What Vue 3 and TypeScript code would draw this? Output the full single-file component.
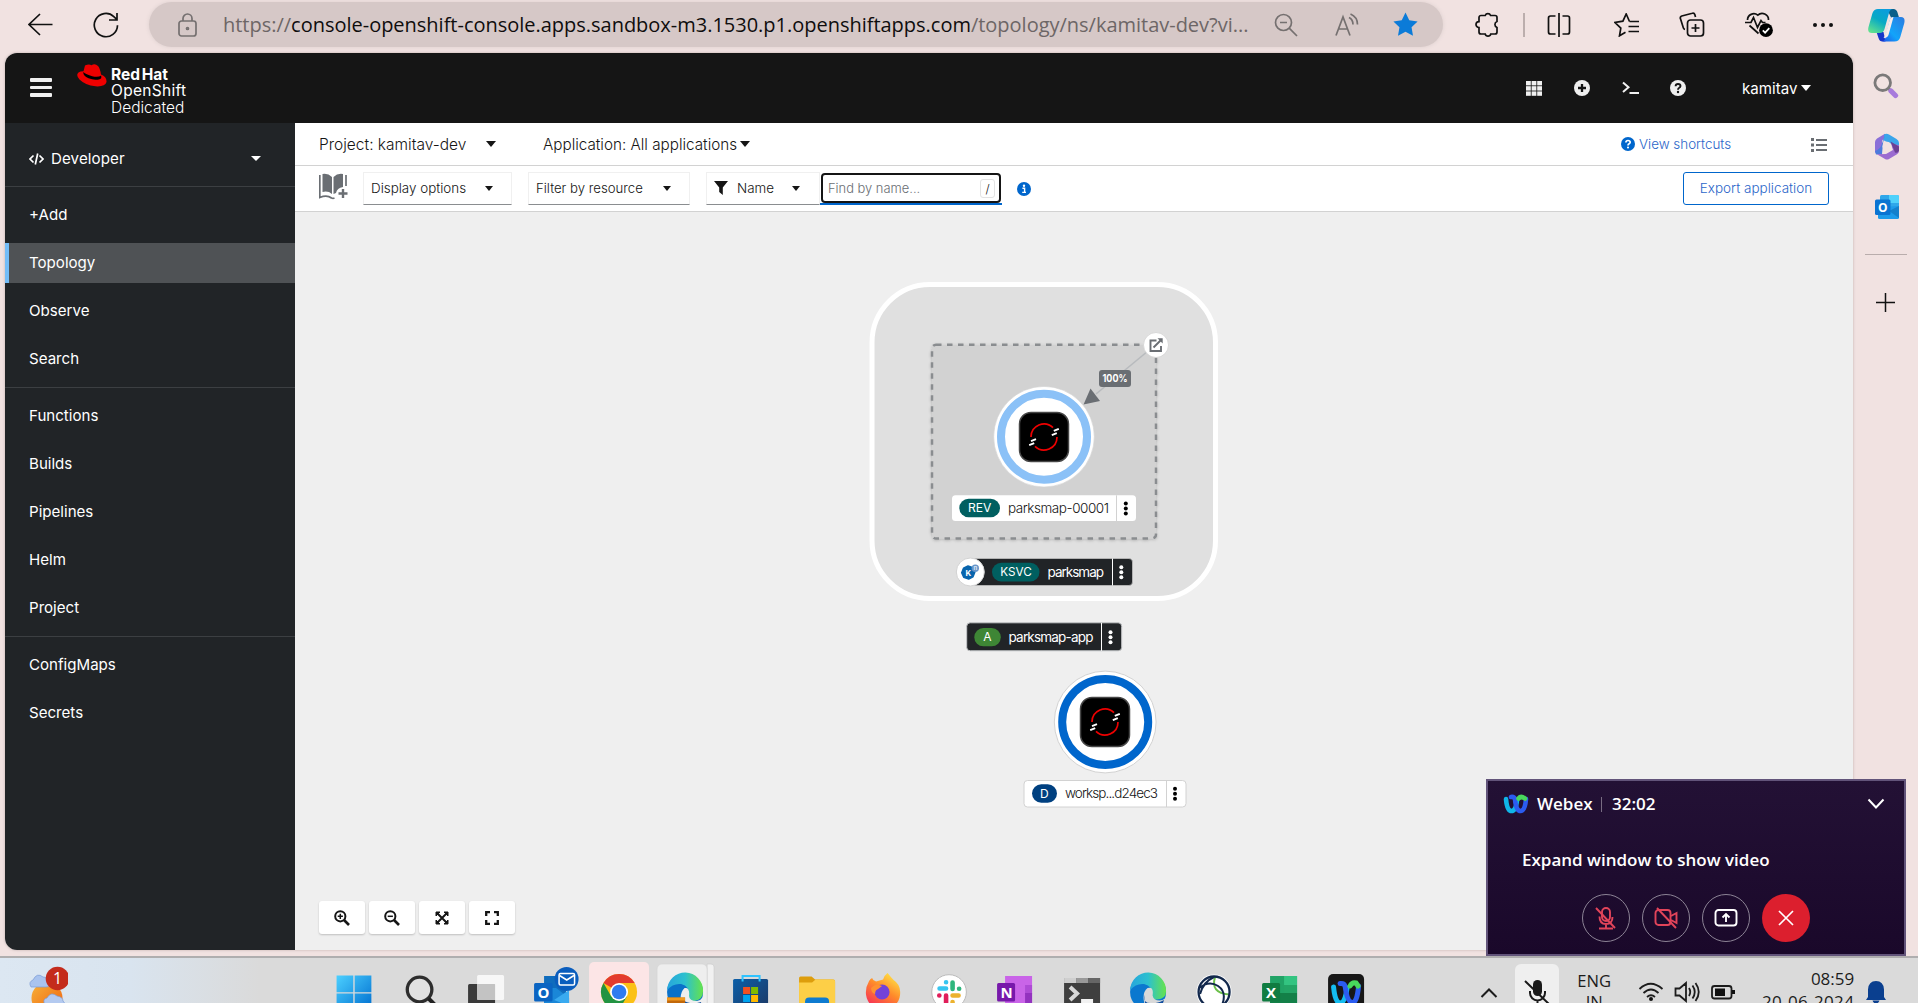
<script setup lang="ts">
interface NavGroup { id: string; items: string[] }

const navGroups: NavGroup[] = [
  { id: 'main', items: ['+Add', 'Topology', 'Observe', 'Search'] },
  { id: 'build', items: ['Functions', 'Builds', 'Pipelines', 'Helm', 'Project'] },
  { id: 'config', items: ['ConfigMaps', 'Secrets'] },
]
const activeItem = 'Topology'
const gridCells = [0, 1, 2, 3, 4, 5, 6, 7, 8]
</script>

<template>
  <div class="screen">
    <!-- Browser toolbar -->
    <header class="toolbar">
      <svg class="tb back" width="25" height="23" viewBox="0 0 25 23"><path d="M24.5 11.5H1M12 1 1 11.5 12 22" /></svg>
      <svg class="tb reload" width="26" height="26" viewBox="0 0 26 26"><path d="M24.5 13.2A11.6 11.6 0 1 1 20.8 4.6L24 7.6M24 1v7h-8" /></svg>
      <div class="address">
        <svg class="tb muted lock" width="19" height="24" viewBox="0 0 19 24"><rect x="1" y="8" width="17" height="15" rx="2.5" /><path d="M5 8V5.5a4.5 4.5 0 0 1 9 0V8" /><circle cx="9.5" cy="15.5" r="1" /></svg>
        <span class="url">https://<b>console-openshift-console.apps.sandbox-m3.1530.p1.openshiftapps.com</b>/topology/ns/kamitav-dev?vi...</span>
        <svg class="tb muted zoomout" width="24" height="24" viewBox="0 0 24 24"><circle cx="9.5" cy="9.5" r="8" /><path d="M6 9.5h7M15.2 15.2 23 23" /></svg>
        <svg class="tb muted aloud" width="24" height="24" viewBox="0 0 24 24"><path d="M1 22.5 8 4l7 18.500M3.500 16h9M14 4.500q4 2 4 7M15.500 1q7 3 7 10.500" /></svg>
        <svg class="star" width="25" height="25" viewBox="0 0 24 24"><path d="m12 .5 3.600 7.300 8 1.200-5.800 5.700 1.400 8.200-7.200-3.900-7.200 3.900 1.400-8.200L.4 9l8-1.200z" fill="#0b7bd8" /></svg>
      </div>
      <svg class="tb puzzle" width="24" height="25" viewBox="0 0 24 25"><path d="M6 3.500h4.200a2.900 2.900 0 0 1 5.400 0H20a2 2 0 0 1 2 2V9.500a3.200 3.200 0 0 0 0 6V20a2 2 0 0 1-2 2h-4.200a2.900 2.900 0 0 1-5.600 0H6a2 2 0 0 1-2-2v-4.400a3 3 0 0 1 0-6V5.500a2 2 0 0 1 2-2z" /></svg>
      <i class="sep"></i>
      <svg class="tb split" width="24" height="24" viewBox="0 0 24 24"><path d="M12 0v24M8.500 3H3.500A2 2 0 0 0 1.500 5v14a2 2 0 0 0 2 2h5M15.500 3h5a2 2 0 0 1 2 2v14a2 2 0 0 1-2 2h-5" /></svg>
      <svg class="tb favs" width="26" height="24" viewBox="0 0 26 24"><path d="M15.500 8.500 12.200 1 8.900 8.200 1 9.500l5.800 5.600L5.500 22.800l6-3.500M15.500 8.500H25M14.500 13.500H25M14.500 18.500H25" /></svg>
      <svg class="tb coll" width="26" height="25" viewBox="0 0 26 25"><rect x="8.500" y="8" width="16" height="16" rx="3" /><path d="M16.500 12v8M12.500 16h8M16.500 5 15.800 2.500a2 2 0 0 0-2.500-1.300L2.800 4A2 2 0 0 0 1.400 6.600l3 9.500A2 2 0 0 0 6 17.500" /></svg>
      <svg class="tb heart" width="29" height="27" viewBox="0 0 29 27"><path d="M2.500 9A6.300 6.300 0 0 1 12.800 4.200 6.300 6.300 0 0 1 23.500 9M0 11.500h6l2.500-5 4 10 3.500-7 1.500 2h3M4.500 14.500l9 8" /><circle cx="21" cy="19.200" r="6.900" fill="#000" stroke="none" /><path d="m17.800 19.400 2.300 2.300 4.200-4.500" stroke="#fff" /></svg>
      <svg class="dots" width="22" height="6" viewBox="0 0 22 6"><circle cx="3" cy="3" r="2" /><circle cx="11" cy="3" r="2" /><circle cx="19" cy="3" r="2" /></svg>
      <svg class="copilot" width="37" height="34" viewBox="0 0 37 34">
        <defs>
          <linearGradient id="cpA" x1=".8" y1="0" x2=".2" y2="1"><stop offset="0" stop-color="#0c9be0" /><stop offset=".5" stop-color="#08aac4" /><stop offset="1" stop-color="#5fe08f" /></linearGradient>
          <linearGradient id="cpB" x1="1" y1="0" x2="0" y2="1"><stop offset="0" stop-color="#2b7be0" /><stop offset=".6" stop-color="#12a4fa" /><stop offset="1" stop-color="#1e50e8" /></linearGradient>
        </defs>
        <path d="M19 1h6.500q3 0 4 3.500L31 9.500h-8z" fill="#0a5f8a" />
        <path d="M8.500 24h7l2 9.500h-3q-3 0-4-3.500z" fill="#1735c9" />
        <path d="M10 1h15q-3 0-4 4l-4.500 16q-1 4-5 4H4q-5 0-3.500-6L4.500 5Q6 1 10 1z" fill="url(#cpA)" />
        <path d="M25.500 9H33q4.500 0 3.300 6l-4 14q-1.200 4.500-6 4.500H13.500q3 0 4-4l4-16.500q1-4 4-4z" fill="url(#cpB)" />
        <path d="M21.500 12.500q1-3.500 4-3.500l-5 18q-1 3-5 3l2-3z" fill="#f6eceb" />
      </svg>
    </header>

    <div class="body">
      <div class="app">
        <!-- Console masthead -->
        <header class="masthead">
          <div class="burger"><i></i><i></i><i></i></div>
          <svg class="hat" width="30" height="23" viewBox="0 0 30 23"><path d="M8 1.500Q12-.5 14.500 1.200 18-1 21 2q2 2 3 8.500Q30 13 29.500 18q-1.500 5-11 4.300Q8 21 2.500 15.500-1.500 11 1.500 8.500 3 7.300 6.500 7.200z" fill="#e00" /><path d="M6.300 8Q6 12 11.500 14.300q6.500 2.600 11.800.6 1.500-.8.900-3.500-3 2.400-9 .8Q9 10.500 6.300 8z" fill="#000" /></svg>
          <div class="brand"><b>Red Hat</b><span>OpenShift</span><span class="ded">Dedicated</span></div>
          <svg class="grid" width="16" height="15" viewBox="0 0 16 15"><rect v-for="n in gridCells" :key="n" :x="(n % 3) * 5.600" :y="Math.floor(n / 3) * 5.200" width="4.800" height="4.400" fill="#f0f0f0" /></svg>
          <svg class="plus" width="16" height="16" viewBox="0 0 16 16"><circle cx="8" cy="8" r="8" fill="#f0f0f0" /><path d="M8 4v8M4 8h8" stroke="#151515" stroke-width="2.300" /></svg>
          <svg class="term" width="17" height="14" viewBox="0 0 17 14"><path d="m1 1.500 5.500 4.800L1 11" fill="none" stroke="#f0f0f0" stroke-width="2" /><path d="M7.500 12H17" stroke="#f0f0f0" stroke-width="2" /></svg>
          <svg class="help" width="16" height="16" viewBox="0 0 16 16"><circle cx="8" cy="8" r="8" fill="#f0f0f0" /><path d="M5.600 6.300Q5.700 4 8 4q2.500 0 2.500 2 0 1-1.300 1.800Q8 8.500 8 9.700" fill="none" stroke="#151515" stroke-width="1.900" /><circle cx="8" cy="12" r="1.200" fill="#151515" /></svg>
          <span class="user">kamitav</span><i class="caret white"></i>
        </header>

        <div class="console">
          <!-- Perspective navigation -->
          <nav class="side">
            <div class="perspective">
              <svg width="15" height="12" viewBox="0 0 15 12"><path d="M4.500 2.500 1 6l3.500 3.500M10.500 2.500 14 6l-3.500 3.500M8.700.5 6.300 11.500" fill="none" stroke="#fff" stroke-width="1.700" /></svg>
              <span>Developer</span><i class="caret white"></i>
            </div>
            <ul v-for="g in navGroups" :key="g.id">
              <li v-for="item in g.items" :key="item" :class="{ active: item === activeItem }">{{ item }}</li>
            </ul>
          </nav>

          <main class="main">
            <div class="bar1">
              <span class="project">Project: kamitav-dev</span><i class="caret black"></i>
              <span class="application">Application: All applications</span><i class="caret black near"></i>
              <svg class="qm" width="14" height="14" viewBox="0 0 16 16"><circle cx="8" cy="8" r="8" fill="#06c" /><path d="M5.600 6.300Q5.700 4 8 4q2.500 0 2.500 2 0 1-1.300 1.800Q8 8.500 8 9.700" fill="none" stroke="#fff" stroke-width="1.900" /><circle cx="8" cy="12" r="1.200" fill="#fff" /></svg>
              <span class="shortcuts">View shortcuts</span>
              <svg class="list" width="16" height="14" viewBox="0 0 16 14"><path d="M0 1.500h3M0 7h3M0 12.500h3" stroke-width="3" /><path d="M5 2h11M5 7h11M5 12h11" stroke-width="2" /></svg>
            </div>

            <div class="bar2">
              <svg class="book" width="29" height="27" viewBox="0 0 29 27"><path d="M3.500 1Q9 0 13 4v17Q9 17.500 3.500 19zM14.500 4Q18.500 0 24 1v13Q18 15 17 20l-2.500 1z" fill="#6a6e73" /><path d="M.8 2v22.500Q8 21.500 12.500 25q1.500.6 3 0M27 2v11" fill="none" stroke="#6a6e73" stroke-width="1.700" /><path d="M24 16v9M19.500 20.500h9" stroke="#6a6e73" stroke-width="2.400" /></svg>
              <div class="select display"><span>Display options</span><i class="caret"></i></div>
              <div class="select filter"><span>Filter by resource</span><i class="caret"></i></div>
              <div class="select name">
                <svg width="14" height="14" viewBox="0 0 14 14"><path d="M0 0h14L8.800 6.500V14L5.200 11V6.500z" fill="#151515" /></svg>
                <span>Name</span><i class="caret"></i>
              </div>
              <div class="find"><div class="ring"><span>Find by name...</span><kbd>/</kbd></div></div>
              <svg class="info" width="14" height="14" viewBox="0 0 14 14"><circle cx="7" cy="7" r="7" fill="#06c" /><circle cx="7" cy="3.700" r="1.200" fill="#fff" /><path d="M5.400 6.200h2.200v4M5.200 10.400h3.800" fill="none" stroke="#fff" stroke-width="1.400" /></svg>
              <button class="export">Export application</button>
            </div>

            <!-- Topology canvas, drawn in window coordinates -->
            <div class="canvas">
              <svg class="graph" width="1558" height="738" viewBox="295 212 1558 738">
                <defs>
                  <g id="os">
                    <rect x="-24.500" y="-24.500" width="49" height="49" rx="11.500" fill="#000" stroke="#474747" stroke-width="1.500" />
                    <path d="M-13 0A13 13 0 0 1 9-9.400M13 0A13 13 0 0 1-9 9.400" fill="none" stroke="#e00" stroke-width="1.700" />
                    <path d="m9.800-6.200 5-2M7.800-1.800l5-2M-14.800 8.200l5-2M-13 4.200l5-2" stroke="#fff" stroke-width="1.900" />
                  </g>
                  <g id="kebab"><circle cy="-5" r="2" /><circle r="2" /><circle cy="5" r="2" /></g>
                  <filter id="sh" x="-20%" y="-20%" width="140%" height="150%"><feDropShadow dx="0" dy="1" stdDeviation="1.500" flood-opacity=".2" /></filter>
                </defs>

                <rect x="872" y="284.500" width="343.500" height="314" rx="58" fill="#e0e0e0" stroke="#fff" stroke-width="5" />
                <g filter="url(#sh)"><rect x="932" y="344.700" width="224" height="193.800" rx="4" fill="#d2d2d2" stroke="#8a8d90" stroke-width="2.500" stroke-dasharray="5.500 5.500" /></g>

                <path d="M1148 351 1096 394" stroke="#b8bbbe" stroke-width="1.600" />
                <path d="m1083.500 404.500 7-16 9.500 12.500z" fill="#6a6e73" />
                <rect x="1099" y="370" width="32" height="17" rx="3" fill="#6a6e73" />
                <text x="1102.500" y="382.200" textLength="25" lengthAdjust="spacingAndGlyphs" class="pct">100%</text>
                <circle cx="1156" cy="345" r="12.500" fill="#fff" stroke="#d2d2d2" stroke-width=".8" />
                <path d="M1156.500 340.500h-6v10.500h10.500v-5M1153.500 347.500l8-8" fill="none" stroke="#6a6e73" stroke-width="1.900" /><path d="M1157.500 338.300h5.200v5.200z" fill="#6a6e73" />

                <circle cx="1044" cy="436.700" r="50.300" fill="#fff" stroke="#d2d2d2" stroke-width=".6" />
                <circle cx="1044" cy="436.700" r="43" fill="none" stroke="#8bc1f7" stroke-width="8" />
                <use href="#os" x="1044" y="437" />

                <rect x="952" y="495.300" width="184" height="25.700" rx="3.500" fill="#fff" />
                <rect x="959.300" y="498.700" width="40.700" height="18.600" rx="9.300" fill="#005f60" />
                <text x="968" y="512.200" textLength="23.500" lengthAdjust="spacingAndGlyphs" class="badge">REV</text>
                <text x="1008" y="513" textLength="101" class="lbl">parksmap-00001</text>
                <path d="M1116.500 495.300v25.700" stroke="#d2d2d2" /><use href="#kebab" x="1125.800" y="508.500" />

                <rect x="972" y="558.500" width="160.500" height="27" rx="3.500" fill="#212427" stroke="#c9c9c9" stroke-width=".7" />
                <circle cx="970.300" cy="572" r="14" fill="#fff" stroke="#d2d2d2" stroke-width="1" />
                <path d="m968 566 4.800 1.800 2 4.500-1.800 4.500-4.300 2.200-5-1.800-2-4.500 1.800-4.500z" fill="#0865ad" stroke="#0865ad" stroke-width="1.500" stroke-linejoin="round" />
                <circle cx="975.300" cy="568.300" r="3.700" fill="#6695ca" /><text x="973.600" y="570.300" class="tiny">n</text>
                <text x="965.500" y="575.600" class="kk">K</text>
                <rect x="992" y="562.800" width="47.500" height="18.600" rx="9.300" fill="#005f60" />
                <text x="1000.300" y="576.200" textLength="31.500" lengthAdjust="spacingAndGlyphs" class="badge">KSVC</text>
                <text x="1047.500" y="577.200" textLength="56.500" class="lbl light">parksmap</text>
                <path d="M1112.500 558.500v27" stroke="#fff" /><use href="#kebab" x="1121.300" y="572.200" fill="#fff" />

                <rect x="966.700" y="622.800" width="155" height="28" rx="3.500" fill="#212427" stroke="#c4c6c8" stroke-width="1" />
                <rect x="974.300" y="628" width="26.500" height="18.300" rx="9.100" fill="#3e8635" />
                <text x="983.300" y="641.400" textLength="8.500" class="badge">A</text>
                <text x="1008.500" y="642" textLength="85" class="lbl light">parksmap-app</text>
                <path d="M1101.500 622.800v28" stroke="#fff" /><use href="#kebab" x="1110.500" y="637.300" fill="#fff" />

                <circle cx="1105.200" cy="722" r="50.900" fill="#fff" stroke="#d2d2d2" />
                <circle cx="1105.200" cy="722" r="43" fill="none" stroke="#06c" stroke-width="8" />
                <use href="#os" x="1105" y="722" />
                <rect x="1024" y="780.500" width="162" height="26.500" rx="3.500" fill="#fff" stroke="#d2d2d2" />
                <rect x="1032" y="784.200" width="25" height="18.600" rx="9.300" fill="#004080" />
                <text x="1040" y="798" textLength="9" class="badge">D</text>
                <text x="1065" y="798" textLength="93" class="lbl">worksp...d24ec3</text>
                <path d="M1166.500 780.500v26.500" stroke="#d2d2d2" /><use href="#kebab" x="1175" y="793.800" />
              </svg>

              <div class="zoomers">
                <button><svg width="16" height="16" viewBox="0 0 16 16"><circle cx="6.300" cy="6.300" r="5.100" /><path d="m10 10 5 5" stroke-width="2.700" /><path d="M6.300 3.700v5.200M3.700 6.300h5.200" stroke-width="1.500" /></svg></button>
                <button><svg width="16" height="16" viewBox="0 0 16 16"><circle cx="6.300" cy="6.300" r="5.100" /><path d="m10 10 5 5" stroke-width="2.700" /><path d="M3.700 6.300h5.200" stroke-width="1.500" /></svg></button>
                <button><svg width="14" height="14" viewBox="0 0 14 14"><path d="m2 2 10 10M12 2 2 12" /><path d="M1 5V1h4zM9 1h4v4zM13 9v4H9zM5 13H1V9z" fill="#151515" stroke-width="1" /></svg></button>
                <button><svg width="14" height="14" viewBox="0 0 14 14"><path d="M1.200 5V1.200H5M9 1.200h3.800V5M12.800 9v3.800H9M5 12.800H1.200V9" stroke-width="2.300" /></svg></button>
              </div>
            </div>
          </main>
        </div>
      </div>

      <!-- Browser side panel -->
      <aside class="panel">
        <svg class="p1" width="26" height="26" viewBox="0 0 26 26"><circle cx="9.700" cy="9.700" r="7.800" fill="none" stroke="#7b7979" stroke-width="2.800" /><path d="m15.500 15.500 3 3" stroke="#7b7979" stroke-width="3" /><path d="m18 18 4.500 4.500" stroke="#a87bdc" stroke-width="5.200" stroke-linecap="round" /></svg>
        <svg class="p2" width="26" height="27" viewBox="0 0 26 27">
          <path d="M11 .8 3 5.500Q1 7 1 9v9q0 2 1.500 3L8 22V9q0-2 1.500-3L12 4z" fill="#8a6fd8" /><path d="M10 5V1.500Q12.500 0 15 1.500L22.500 6Q25 7.500 25 10v5L9 7z" fill="#3aa5ea" /><path d="M11 1 9 10l-1 11-6 .500L1 18Q6 16 7.500 12T11 1z" fill="#4d7bdc" /><path d="M25 12v6q0 2-2 3.200L15 26q-2 1-4 0l-8-4.700 9-.300 7-4-2-6z" fill="#9b6bd0" /><path d="m16.500 8.500 8.500 5v4q-1 3-4 2z" fill="#6b3f93" /><circle cx="13" cy="13.300" r="4.500" fill="#f1e2e1" />
        </svg>
        <svg class="p3" width="25" height="25" viewBox="0 0 25 25"><rect x="5" y="0" width="19" height="14" rx="1.500" fill="#2fa7ea" /><path d="M14 0h8.500Q24 0 24 1.500V8H14z" fill="#50d1fb" /><path d="M3 12 24 11v11.500q0 1.500-1.500 1.500h-18Q3 24 3 22.500z" fill="#1d9bea" /><path d="m14 16 10-5v12z" fill="#1480cc" /><rect x="0" y="4.500" width="15.500" height="15.500" rx="1.500" fill="#0a74d2" /><text x="3" y="16.700" class="oo">O</text></svg>
        <hr />
        <svg class="p4" width="19" height="19" viewBox="0 0 19 19"><path d="M9.500 0v19M0 9.500h19" stroke="#111" stroke-width="1.500" /></svg>
      </aside>
    </div>

    <!-- Taskbar -->
    <footer class="taskbar">
      <svg class="weather" width="40" height="47" viewBox="28 956 40 47"><defs><linearGradient id="sun" x1="0" y1="0" x2="1" y2="1"><stop offset="0" stop-color="#f6b23a" /><stop offset="1" stop-color="#f0600d" /></linearGradient></defs><circle cx="47" cy="998" r="15.500" fill="url(#sun)" /><path d="M31 987q-3-5 2-7 4-8 10-3 5 0 5 5 3 5-2 5z" fill="#a9c3ee" stroke="#7d9cd6" stroke-width=".7" /><path d="M45 1005q-3-6 2-7 4-7 10-2 6 1 6 5 3 2 1 5z" fill="#b4caf0" stroke="#7d9cd6" stroke-width=".7" /><circle cx="57.500" cy="978.500" r="11.800" fill="#c42b1c" /></svg>
      <span class="count">1</span>
      <div class="apps">
        <svg viewBox="-33 -36 66 47"><defs><linearGradient id="win" gradientUnits="userSpaceOnUse" x1="-17" y1="-17" x2="17" y2="17"><stop offset="0" stop-color="#4cd0ff" /><stop offset="1" stop-color="#006fd0" /></linearGradient></defs><path d="M-17.500-16.500h16.700V.3h-16.700zM.6-16.500h16.700V.3H.6zM-17.500 1.500h16.700v17h-16.700zM.6 1.500h16.700v17H.6z" fill="url(#win)" /></svg>
        <svg viewBox="-33 -36 66 47"><circle cx="-.5" cy="-2.500" r="12.300" fill="#e4e4e4" fill-opacity=".7" stroke="#2d2d2d" stroke-width="3.300" /><path d="m8.500 6.500 8 8" stroke="#222" stroke-width="4" /></svg>
        <svg viewBox="-33 -36 66 47"><rect x="-18" y="-8" width="27" height="24" rx="1.500" fill="#3a3a3a" /><rect x="-9" y="-17" width="27" height="25" rx="1.500" fill="#fafafa" fill-opacity=".88" /><path d="M-9-8H9V8H-9z" fill="#b8b8b8" opacity=".75" /></svg>
        <svg viewBox="-33 -36 66 47"><path d="M-8-16H14V20H-8z" fill="#0f6cbd" /><path d="M-8-4h12L17 6v12H-8z" fill="#1a87d8" /><path d="m17-2-15 10 15 6z" fill="#39aaf0" /><rect x="-18" y="-9" width="18.500" height="18.500" rx="1.500" fill="#0a64c2" /><text x="-14.700" y="5.500" class="ti">O</text><circle cx="14.500" cy="-13" r="12" fill="#0a5dbd" /><rect x="7" y="-18.500" width="15.500" height="11.500" rx="1.500" fill="none" stroke="#fff" stroke-width="1.500" /><path d="m7.500-16.500 7.200 4.500 7.200-4.500" fill="none" stroke="#fff" stroke-width="1.500" /></svg>
        <svg viewBox="-33 -36 66 47"><rect x="-30" y="-30" width="60" height="50" rx="5" fill="#fce5e6" /><circle r="18" fill="#fbc116" /><path d="M0 0-15.600-9A18 18 0 0 1 15.600-9H0z" fill="#e33b2e" /><path d="M-15.600-9A18 18 0 0 0 0 18L7.800 4.500-7.800 4.500z" fill="#229342" /><circle r="9" fill="#fff" /><circle r="7.300" fill="#2f7bf0" /></svg>
        <svg viewBox="-33 -36 66 47"><defs><linearGradient id="eg"><stop offset="0" stop-color="#27a5dc" /><stop offset=".5" stop-color="#2cc0cf" /><stop offset="1" stop-color="#66e34a" /></linearGradient></defs><path d="M22-28h4q3 0 3 3v40h-7z" fill="#f1f1f1" stroke="#ccc" stroke-width=".7" /><rect x="-28" y="-28" width="50" height="50" rx="5" fill="#eee" stroke="#d4d4d4" stroke-width=".6" /><circle r="18" fill="#0a71c9" /><path d="M-18-2A18 18 0 0 1 18-1Q18 8 9 9 2 9 4 4.500 5-6-4-8-12-9-18-2z" fill="url(#eg)" /><path d="M-4 12Q-6 1-.5-4 5-5 4 4q0 5 8 5 3 0 5-3l2 7z" fill="#eee" /><path d="M-1 9q8 4 17 1v9H-1z" fill="#15509e" /><rect x="-18" y="5.500" width="18" height="12" fill="#c2680a" /><path d="M-18 5.500H0v3h-18z" fill="#f29a1c" /></svg>
        <svg viewBox="-33 -36 66 47"><defs><linearGradient id="st" x1="0" y1="0" x2="1" y2="1"><stop offset="0" stop-color="#0c5fa8" /><stop offset="1" stop-color="#1d3560" /></linearGradient></defs><rect x="-18" y="-13" width="35" height="35" rx="1.500" fill="url(#st)" /><path d="M-8.500-10.500v-5.500h17v5.500" fill="none" stroke="#2fc3ff" stroke-width="2" /><path d="M-8-5h7v7h-7z" fill="#f25022" /><path d="M0-5h7v7H0z" fill="#7fba00" /><path d="M-8 3h7v7h-7z" fill="#00a4ef" /><path d="M0 3h7v7H0z" fill="#ffb900" /></svg>
        <svg viewBox="-33 -36 66 47"><path d="M-18-14q0-1.500 1.500-1.500h11l3.500 3H16q2 0 2 2V14h-36z" fill="#dd9d0c" /><path d="M-18-9.500h13l3.500-3H16q2 0 2 2V14h-36z" fill="#fdcf47" /><path d="M-12 14V9.500q0-4 4-4H8q4 0 4 4V14z" fill="#0f7bd0" /></svg>
        <svg viewBox="-33 -36 66 47"><defs><linearGradient id="ff" x1=".8" y1="0" x2=".2" y2="1"><stop offset="0" stop-color="#ffe847" /><stop offset=".45" stop-color="#ff8a2a" /><stop offset="1" stop-color="#f6245d" /></linearGradient></defs><path d="M-14-11q1-2 3-3 1 3 4 3.500l7-2q1-4 4.500-6.500 4 5 6 7 6 4 6.500 11A17 17 0 0 1-17 3q-1-7 3-14z" fill="url(#ff)" /><circle cx="-1" cy="0" r="7.500" fill="#7342d8" /><path d="M-12-4q5-5 8-3l3 1-4 3q-3 1-3 5-4-1-4-6z" fill="#ff9130" /></svg>
        <svg viewBox="-33 -36 66 47"><circle r="17.300" fill="#fff" stroke="#bbb" stroke-width="1" /><g stroke-width="4.600" stroke-linecap="round"><path d="M-9.500-3.500h6.500M-3-9.800v.1" stroke="#36c5f0" /><path d="M3.500-9.500v6.500M10-3.200h.1" stroke="#2eb67d" /><path d="M9.500 3.500H3.500M3.500 10v.1" stroke="#ecb22e" /><path d="M-3 3.500v8M-9.800 3.500h.1" stroke="#e01e5a" /></g></svg>
        <svg viewBox="-33 -36 66 47"><path d="M-10-16H17V14h-27z" fill="#c964e8" /><path d="M10-7h7V2h-7z" fill="#ae4bd5" /><path d="M10 1h7v12h-7z" fill="#9332bf" /><rect x="-18" y="-9" width="18" height="18.500" rx="1.500" fill="#7719aa" /><text x="-14.600" y="5.500" class="ti">N</text></svg>
        <svg viewBox="-33 -36 66 47"><path d="M-18-14h36v28h-36z" fill="#3f3f3f" /><path d="M-18-14h12v5h-12z" fill="#cfcfcf" /><path d="M-6-14H6v5H-6z" fill="#999" /><path d="M6-14h12v5H6z" fill="#666" /><path d="m-12-5 7 6.500-7 6.500" fill="none" stroke="#d9d9d9" stroke-width="4" /><path d="M-1 7h12v4H-1z" fill="#f2f2f2" /></svg>
        <svg viewBox="-33 -36 66 47"><circle r="18" fill="#0b78cf" /><path d="M-18-2A18 18 0 0 1 18-1Q18 7 9 7.500 2 8 4 3.500 5-6-4-8-12-9-18-2z" fill="url(#eg)" /><path d="M-3 14Q-7 1-.5-4 6-6 4.500 3.500q1 5 7 5 3 0 5.500-2l1 4q-8 6-21 3.500z" fill="#d9d9d9" /><path d="M-4 3q-1 8 6 8 7 1 14-3l-4 11H-2z" fill="#134f9f" /></svg>
        <svg viewBox="-33 -36 66 47"><circle r="17.500" fill="#fff" /><g fill="none" stroke-width="2"><path d="M1-15q-5 16 14 17.500" stroke="#6cc04a" /><circle r="15.500" stroke="#12284c" stroke-width="2.300" /><path d="M-15-4Q-5-12 4-6t4 19M-14 2q3-12 14-17" stroke="#12284c" /></g></svg>
        <svg viewBox="-33 -36 66 47"><path d="M-10-16H17V14h-27z" fill="#21a366" /><path d="M4-16h13v9H4z" fill="#33c481" /><path d="M4-7h13V1H4z" fill="#23a566" /><path d="M-10 1H17v12h-27z" fill="#138048" /><rect x="-18" y="-9" width="18" height="18.500" rx="1.500" fill="#107c41" /><text x="-14" y="5.500" class="ti">X</text></svg>
        <svg viewBox="-33 -36 66 47"><rect x="-18" y="-18" width="36" height="40" rx="5" fill="#171717" /><g fill="none" stroke-width="5" stroke-linecap="round"><path d="M-12.500-5Q-11 11-6 11T1-4" stroke="#14bdf0" /><path d="M12.500-6Q11 11 6 10.500T-1-6Q-2-9-6-8.500" stroke="#2b5cf0" /><path d="M4-6q2-4 6-3l2 3" stroke="#48d75c" /></g></svg>
      </div>
      <svg class="chev" width="18" height="12" viewBox="0 0 18 12"><path d="m1.500 10 7.500-7.500 7.500 7.500" fill="none" stroke="#1c1c1c" stroke-width="2" /></svg>
      <div class="mictile"><svg width="28" height="30" viewBox="0 0 28 30"><rect x="9" y="1" width="9" height="16" rx="4.500" fill="#1a1a1a" /><path d="M6 12v2a7.500 7.500 0 0 0 15 0v-2M13.500 21.500V26M1 2l25 24" fill="none" stroke="#1a1a1a" stroke-width="2" /></svg></div>
      <div class="lang"><span>ENG</span><span>IN</span></div>
      <svg class="status" width="98" height="24" viewBox="1639 981 98 24"><g fill="none" stroke="#1c1c1c" stroke-width="1.800"><path d="M1640.500 989q11-10.500 23 0M1644.500 993q7.500-7 15 0M1648 997q4-3.500 8 0" /><path d="m1676.500 988.500h4l6.500-5.500v18l-6.500-5.500h-4zM1690 988q2.500 4 0 8M1693.500 985.500q4.500 6.500 0 13M1696.500 983q6.500 9 0 18" /><rect x="1713" y="986" width="19.500" height="12.500" rx="2.500" /></g><circle cx="1652" cy="999" r="2" fill="#111" /><path d="M1716 988.500h10v7.500h-10zM1733 990h3v4h-3z" fill="#111" /></svg>
      <div class="clock"><span>08:59</span><span class="date">20-06-2024</span></div>
      <svg class="bell" width="22" height="24" viewBox="0 0 22 24"><path d="M3 17V9.500Q3.500 1 11 1t8 8.500V17l2 3H1z" fill="#0a3f8f" /><path d="M7.500 20.500h7q-1 3-3.500 3t-3.500-3z" fill="#0a3f8f" /></svg>
    </footer>

    <!-- Floating call window -->
    <section class="webex">
      <div class="wtop">
        <svg width="26" height="20" viewBox="0 0 26 20"><g fill="none" stroke-width="4.600" stroke-linecap="round"><path d="M3 5Q4 17 8.500 17T14 6" stroke="#10b6e8" /><path d="M23 5q-1 12-5.500 12T12 5Q11 2.500 8 3" stroke="#2b5cf0" /><path d="M15.500 4.500Q18 1.500 22 4.500" stroke="#48d75c" /></g></svg>
        <span class="wname">Webex</span><i></i><span>32:02</span>
        <svg class="down" width="18" height="12" viewBox="0 0 18 12"><path d="m1.500 1.500 7.500 8 7.500-8" fill="none" stroke="#fff" stroke-width="2" /></svg>
      </div>
      <p>Expand window to show video</p>
      <div class="wbtns">
        <span><svg width="22" height="24" viewBox="0 0 22 24"><g fill="none" stroke="#e2445a" stroke-width="1.900"><rect x="7" y="2" width="8" height="13" rx="4" /><path d="M4.500 10.500Q4.500 18 11 18t6.500-7M11 18v4M4 22.500h14M1 2l19 20" /></g></svg></span>
        <span><svg width="24" height="22" viewBox="0 0 24 22"><g fill="none" stroke="#e2445a" stroke-width="1.900"><rect x="1.500" y="3" width="15" height="15" rx="3" /><path d="m17 9 5.500-3v10L17 13M3 1l19 20" /></g></svg></span>
        <span><svg width="24" height="20" viewBox="0 0 24 20"><g fill="none" stroke="#fff" stroke-width="1.900"><rect x="1.500" y="2" width="21" height="15.500" rx="3" /><path d="M12 14V6.500M8.500 9.500 12 6l3.500 3.500" /></g></svg></span>
        <span class="end"><svg width="18" height="18" viewBox="0 0 18 18"><path d="m2 2 14 14M16 2 2 16" stroke="#fff" stroke-width="1.700" /></svg></span>
      </div>
    </section>
  </div>
</template>

<style scoped>
.screen { position: relative; display: flex; flex-direction: column; width: 1918px; height: 1003px; overflow: hidden; background: #f1e2e1; font-family: Inter, "Open Sans", sans-serif; color: #151515; }
svg { display: block; flex: none; }
i { display: block; flex: none; font-style: normal; }

.toolbar { display: flex; align-items: center; height: 49px; margin-bottom: 4px; flex: none; }
.tb { fill: none; stroke: #111; stroke-width: 1.7; }
.muted { stroke: #757070; }
.back { margin-left: 28px; }
.reload { margin-left: 40px; }
.address { display: flex; align-items: center; width: 1294px; height: 45px; margin-left: 30px; border-radius: 23px; background: #d6c8c7; box-shadow: 0 0 4px #dccfce; flex: none; }
.lock { margin-left: 29px; }
.url { width: 1031px; margin-left: 26px; font: 400 20px/28px "Open Sans", sans-serif; letter-spacing: -.015px; color: #6d6666; white-space: nowrap; }
.url b { font-weight: 400; color: #0f0d0d; }
.zoomout { margin-left: 20px; }
.aloud { margin-left: 37px; }
.star { margin-left: 34px; }
.puzzle { margin-left: 32px; }
.sep { width: 2px; height: 24px; margin-left: 24px; background: #bcaead; }
.split { margin-left: 22px; }
.favs { margin-left: 43px; }
.coll { margin-left: 39px; }
.heart { margin-left: 40px; }
.dots { margin-left: 38px; fill: #111; }
.copilot { margin-left: 34px; }

.body { display: flex; height: 897px; flex: none; }
.app { display: flex; flex-direction: column; width: 1848px; margin-left: 5px; border-radius: 12px 12px 0 12px; overflow: hidden; box-shadow: 0 0 2px 1px #d9c9c8; background: #efefef; flex: none; }
.masthead { display: flex; align-items: center; height: 70px; background: #151515; color: #fff; flex: none; }
.burger { display: flex; flex-direction: column; gap: 4px; margin: 0 0 1px 25px; }
.burger i { width: 22px; height: 3.500px; background: #f0f0f0; border-radius: 1px; }
.hat { margin: -26px 0 0 25px; }
.brand { display: flex; flex-direction: column; width: 90px; margin: 7px 0 0 4px; font-size: 15.500px; line-height: 16.600px; }
.brand b { font-size: 15.500px; font-weight: 700; letter-spacing: 0; word-spacing: -2px; }
.brand span { letter-spacing: .3px; }
.brand .ded { letter-spacing: 0; font-weight: 300; }
.grid { margin-left: 1325px; }
.plus { margin-left: 32px; }
.term { margin-left: 32px; }
.help { margin-left: 31px; }
.user { width: 55px; margin-left: 56px; font-size: 15.100px; }
.caret { width: 0; height: 0; border: solid transparent; border-width: 6px 5px 0; border-top-color: #151515; }
.caret.white { border-top-color: #fff; margin-left: 4px; }

.console { display: flex; flex: 1; }
.side { width: 290px; background: #212427; color: #fff; font-size: 15.100px; flex: none; }
.perspective { display: flex; align-items: center; height: 63px; padding: 8px 0 0 24px; box-sizing: border-box; }
.perspective span { width: 200px; margin-left: 7px; letter-spacing: .1px; }
.perspective .caret { border-width: 5px 5px 0; margin: -1px 0 0; }
.side ul { display: flex; flex-direction: column; gap: 8px; margin: 0; padding: 8px 0; list-style: none; border-top: 1px solid #3c3f42; }
.side li { height: 40px; padding-left: 24px; line-height: 40px; }
.side li.active { background: #4f5255; border-left: 4px solid #73bcf7; padding-left: 20px; }

.main { display: flex; flex-direction: column; width: 1558px; flex: none; }
.bar1 { display: flex; align-items: center; height: 43px; box-sizing: border-box; padding-top: 0; border-bottom: 1px solid #d2d2d2; background: #fff; font-size: 15.500px; font-weight: 300; flex: none; }
.project { width: 167px; margin-left: 24px; }
.application { width: 197px; margin-left: 47px; font-size: 15.250px; }
.near { margin-left: 0; }
.qm { margin-left: 871px; }
.shortcuts { width: 94px; margin-left: 4px; color: #2b66c9; font-size: 13.400px; white-space: nowrap; flex: none; }
.list { margin-left: 78px; margin-top: 1px; fill: none; stroke: #6a6e73; }
.bar2 { display: flex; align-items: center; height: 46px; box-sizing: border-box; border-bottom: 1px solid #d2d2d2; background: #fff; font-size: 13.400px; font-weight: 300; flex: none; }
.book { margin-left: 24px; margin-top: -4px; }
.select { display: flex; align-items: center; height: 33px; box-sizing: border-box; border: 1px solid #f0f0f0; border-bottom-color: #8a8d90; padding: 0 0 1px 7px; flex: none; }
.select span { flex: none; white-space: nowrap; }
.select .caret { border-width: 5px 4.500px 0; }
.display { width: 149px; margin-left: 15px; }
.display span { width: 114px; }
.filter { width: 162px; margin-left: 16px; }
.filter span { width: 127px; font-size: 13.200px; }
.name { width: 114px; margin-left: 16px; }
.name span { width: 55px; margin-left: 9px; }
.find { width: 182px; height: 33px; box-sizing: border-box; border-bottom: 2px solid #06c; padding: 1px 1px 0; flex: none; }
.ring { display: flex; align-items: center; height: 30px; box-sizing: border-box; border: 2px solid #151515; border-radius: 4px; padding-left: 5px; }
.ring span { width: 152px; color: #6a6e73; font-size: 12.900px; }
.ring kbd { width: 13px; height: 17px; border: 1px solid #e3e3e3; border-radius: 3px; font: 300 12px/17px Inter, sans-serif; text-align: center; }
.info { margin-left: 15px; }
.export { width: 146px; height: 33px; margin-left: 652px; padding: 0 0 1px; border: 1px solid #06c; border-radius: 3px; background: #fff; color: #2b66c9; font: 300 13.500px Inter, sans-serif; flex: none; }

.canvas { position: relative; flex: 1; background: #efefef; }
.lbl { font: 300 13.500px Inter, sans-serif; fill: #151515; }
.lbl.light { font-weight: 400; fill: #fff; }
.badge { font: 400 12px Inter, sans-serif; fill: #fff; }
.pct { font: 700 10px Inter, sans-serif; fill: #fff; }
.tiny { font: 700 6px Inter, sans-serif; fill: #dce8f5; }
.kk { font: 700 8px Inter, sans-serif; fill: #fff; }
.zoomers { position: absolute; left: 24px; bottom: 16px; display: flex; gap: 4px; }
.zoomers button { display: flex; align-items: center; justify-content: center; width: 46px; height: 33px; padding: 0; border: 0; border-radius: 3px; background: #fff; box-shadow: 0 1px 2px #0003; }
.zoomers svg { fill: none; stroke: #151515; stroke-width: 2; }

.panel { display: flex; flex-direction: column; align-items: center; width: 65px; padding-right: 0; box-sizing: border-box; }
.p1 { margin-top: 20px; }
.p2 { margin-top: 34px; margin-left: 3px; }
.p3 { margin-top: 35px; margin-left: 3px; }
.panel hr { width: 42px; height: 1px; margin: 34px 0 0 1px; border: 0; background: #b9adac; }
.p4 { margin-top: 38px; }
.oo { font: 700 12px "Open Sans", sans-serif; fill: #fff; }

.taskbar { position: relative; display: flex; height: 47px; margin-top: 6px; box-sizing: border-box; background: linear-gradient(90deg, #dce7f2, #d9e4ef 130px, #dadada 260px); font: 400 17px/21px "Open Sans", sans-serif; color: #1c1c1c; box-shadow: inset 0 2px #afaeaf; flex: none; }
.weather { margin-left: 28px; }
.count { position: absolute; left: 53px; top: 12px; color: #fff; font-size: 16px; }
.apps { display: flex; margin-left: 253px; }
.apps svg { width: 66.150px; height: 47px; }
.ti { font: 700 15px "Open Sans", sans-serif; fill: #fff; }
.chev { margin: 31px 0 0 101px; }
.mictile { width: 44px; height: 50px; margin: 8px 0 0 17px; border-radius: 6px; background: #efefef; flex: none; }
.mictile svg { margin: 15px 0 0 9px; }
.lang { display: flex; flex-direction: column; align-items: center; width: 36px; margin: 14px 0 0 17px; font-size: 16.600px; }
.status { margin: 25px 0 0 26px; }
.clock { display: flex; flex-direction: column; align-items: flex-end; width: 118px; margin: 12px 0 0; }
.date { margin-top: 2px; letter-spacing: .350px; }
.bell { margin: 24px 0 0 11px; }

.webex { position: absolute; left: 1486px; top: 779px; width: 420px; height: 177px; box-sizing: border-box; border: 2px solid #62547a; background: linear-gradient(#231135, #1a082a); color: #fff; font: 600 17px/24px "Open Sans", sans-serif; }
.wtop { display: flex; align-items: center; height: 24px; margin: 11px 0 0 15px; }
.wname { width: 64px; margin-left: 8px; }
.wtop i { width: 1px; height: 15px; margin-right: 10px; background: #786c82; }
.down { margin-left: 211px; }
.webex p { margin: 32px 0 0 34px; }
.wbtns { display: flex; gap: 12px; margin: 22px 0 0 94px; }
.wbtns span { display: flex; align-items: center; justify-content: center; width: 48px; height: 48px; box-sizing: border-box; border: 1.500px solid #8c8395; border-radius: 50%; }
.wbtns .end { border: 0; background: #dc1f2e; }
</style>

<style>
html, body { margin: 0; overflow: hidden; }
</style>
